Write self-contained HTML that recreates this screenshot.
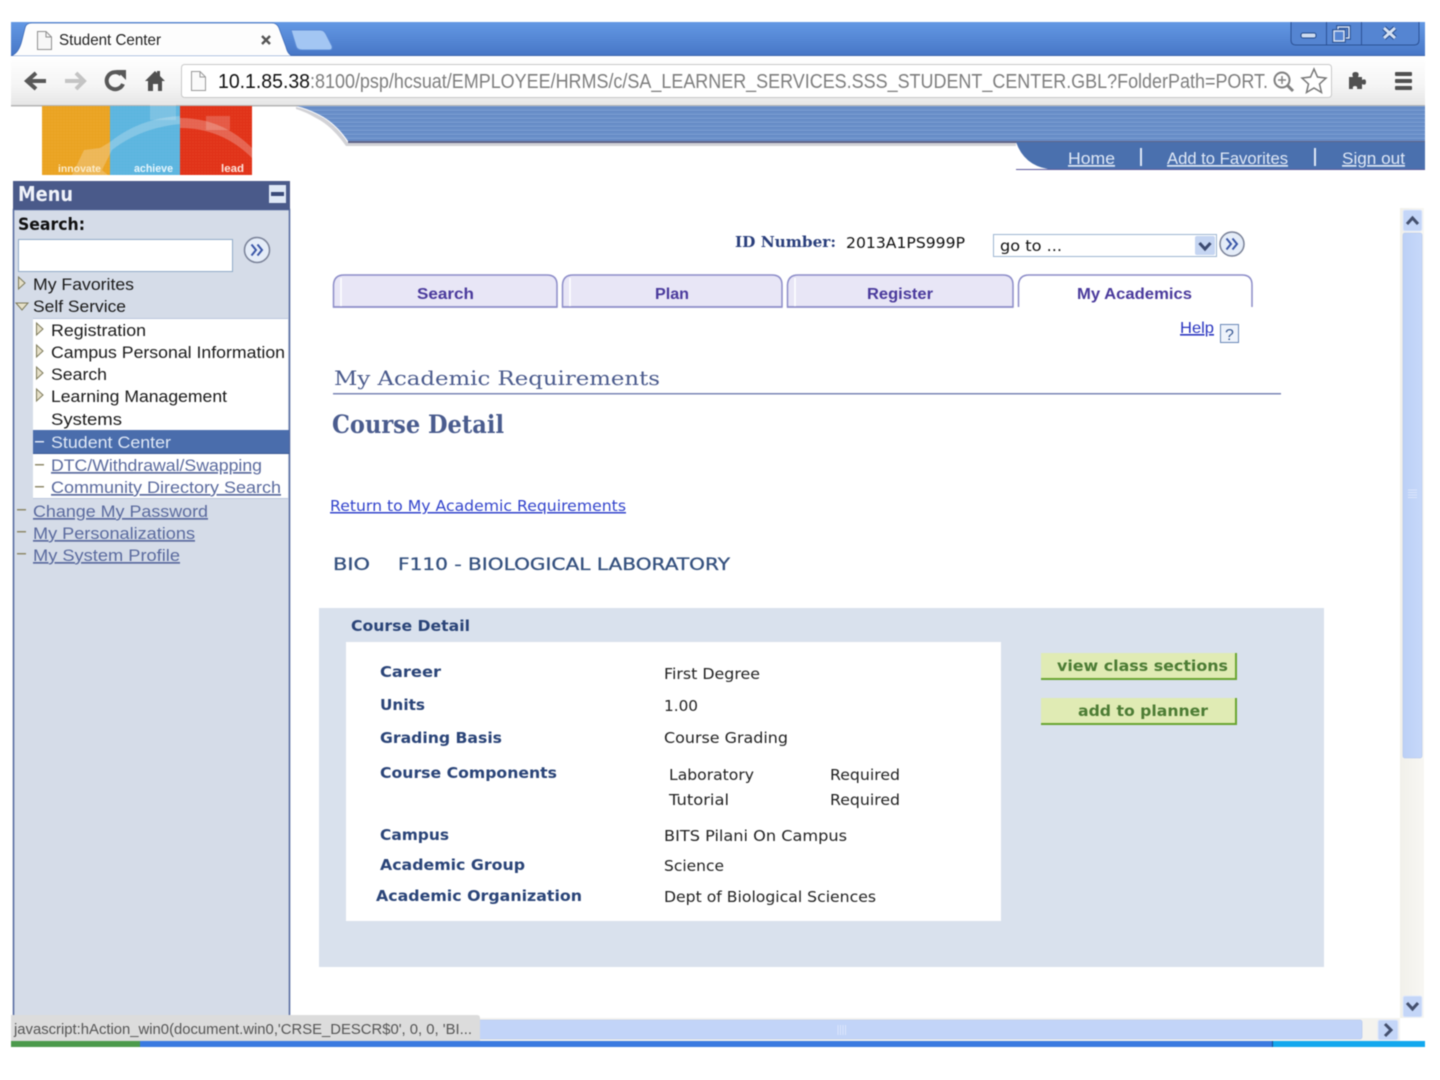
<!DOCTYPE html>
<html><head><meta charset="utf-8"><title>Student Center</title>
<style>
html,body{margin:0;padding:0;background:#fff;width:1440px;height:1080px;overflow:hidden}
svg{display:block;filter:blur(.45px)}
text{white-space:pre}
.s{font-family:"Liberation Sans",sans-serif}
.d{font-family:"DejaVu Sans",sans-serif}
.f{font-family:"DejaVu Serif","Liberation Serif",serif}
.m{font-size:17px;fill:#1a1a1a}
.l{font-size:17px;fill:#5a6a9e;text-decoration:underline}
.n{font-size:17px;fill:#dfe8f6;text-decoration:underline}
.t{font-size:16px;font-weight:bold;fill:#4a3a9c}
.b{font-family:"DejaVu Sans",sans-serif;font-size:15px;font-weight:bold;fill:#2a4478}
.v{font-family:"DejaVu Sans",sans-serif;font-size:15px;fill:#222}
.g{font-family:"DejaVu Sans",sans-serif;font-size:15px;font-weight:bold;fill:#4c7c34}
</style></head><body>
<svg width="1440" height="1080" viewBox="0 0 1440 1080" xmlns="http://www.w3.org/2000/svg">
<defs>
<linearGradient id="fr" x1="0" y1="0" x2="0" y2="1"><stop offset="0" stop-color="#6398e4"/><stop offset="1" stop-color="#4776c6"/></linearGradient>
<linearGradient id="tb" x1="0" y1="0" x2="0" y2="1"><stop offset="0" stop-color="#ffffff"/><stop offset=".6" stop-color="#f5f5f5"/><stop offset="1" stop-color="#e6e6e6"/></linearGradient>
<linearGradient id="tr" x1="0" y1="0" x2="1" y2="0"><stop offset="0" stop-color="#f1f0ea"/><stop offset="1" stop-color="#f8f7f3"/></linearGradient>
<linearGradient id="sb" x1="0" y1="0" x2="1" y2="0"><stop offset="0" stop-color="#bcd0f6"/><stop offset="1" stop-color="#c6d8fa"/></linearGradient>
<pattern id="st" width="4" height="4" patternUnits="userSpaceOnUse"><rect width="4" height="4" fill="#6b90c9"/><rect y="2" width="4" height="1" fill="#7c9ed3"/><rect y="3" width="4" height="1" fill="#5f86c2"/></pattern>
<pattern id="dots" width="3" height="3" patternUnits="userSpaceOnUse"><rect width="3" height="3" fill="#000" fill-opacity=".04"/><rect width="2" height="2" fill="#fff" fill-opacity=".04"/></pattern>
</defs>

<!-- window frame -->
<rect x="11" y="22" width="1414" height="34" fill="url(#fr)"/>
<rect x="11" y="55" width="1414" height="1" fill="#3a64ac"/>
<path d="M1291 22V40Q1291 45 1296 45H1414Q1419 45 1419 40V22" fill="#5585d2" stroke="#2c5296" stroke-width="1"/>
<path d="M1326.500 22V45M1361.500 22V45" stroke="#2c5296"/>
<rect x="1301" y="33" width="15" height="5" rx="2" fill="#cfdcf0" stroke="#234a8c"/>
<rect x="1338" y="27" width="11" height="11" fill="none" stroke="#234a8c" stroke-width="3.500"/>
<rect x="1338" y="27" width="11" height="11" fill="none" stroke="#dbe6f6" stroke-width="1.500"/>
<rect x="1334" y="31" width="10" height="10" fill="#5585d2" stroke="#234a8c" stroke-width="3.500"/>
<rect x="1334" y="31" width="10" height="10" fill="#5585d2" stroke="#dbe6f6" stroke-width="1.500"/>
<path d="M1384 28L1395 38M1395 28L1384 38" stroke="#234a8c" stroke-width="5"/>
<path d="M1384 28L1395 38M1395 28L1384 38" stroke="#d5e1f3" stroke-width="3"/>
<!-- new tab -->
<path d="M291 30H320Q324 30 326 34L332 46Q333 50 329 50H302Q297 50 296 46Z" fill="#a3c6f3" stroke="#5b8bd6"/>
<!-- active tab -->
<path d="M11 56Q19 53 22 40L25 28Q26 23 32 23H272Q277 23 279 28L286 47Q288 55 293 56Z" fill="#fdfdfd" stroke="#3e6bb8" stroke-width=".8"/>
<path d="M37.500 31.500H46L51.500 37V49.500H37.500Z" fill="#f7f7f7" stroke="#8f8f8f"/><path d="M46 31.500V37H51.500" fill="none" stroke="#8f8f8f"/>
<text class="s" x="59" y="45" font-size="16" fill="#222" textLength="102" lengthAdjust="spacingAndGlyphs">Student Center</text>
<path d="M262 36L270 44M270 36L262 44" stroke="#555" stroke-width="2.400"/>

<!-- toolbar -->
<rect x="11" y="56" width="1414" height="49" fill="url(#tb)"/>
<rect x="11" y="56" width="279" height="2" fill="#fff"/>
<rect x="11" y="105" width="1414" height="1.500" fill="#b4b4b4"/>
<path d="M46 81H30M36 73L27 81L36 89" fill="none" stroke="#585858" stroke-width="4"/>
<path d="M65 81H82M76 73L84 81L76 89" fill="none" stroke="#c4c4c4" stroke-width="4"/>
<path d="M123 84A8.500 8.500 0 1 1 121 74.500" fill="none" stroke="#585858" stroke-width="4"/><path d="M116 70H126V80Z" fill="#585858"/>
<path d="M155 71L145 81H148V91H153V84H158V91H162V81H165L160 76V71H157V73Z" fill="#505050"/>
<rect x="181.500" y="64.500" width="1150" height="33" rx="3" fill="#fff" stroke="#c8c8c8"/>
<path d="M191.500 71.500H200L205.500 77V90.500H191.500Z" fill="#fafafa" stroke="#9a9a9a"/><path d="M200 71.500V77H205.500" fill="none" stroke="#9a9a9a"/>
<text class="s" x="218" y="88" font-size="20" fill="#111" textLength="92" lengthAdjust="spacingAndGlyphs">10.1.85.38</text>
<text class="s" x="310" y="88" font-size="20" fill="#7e7e7e" textLength="958" lengthAdjust="spacingAndGlyphs">:8100/psp/hcsuat/EMPLOYEE/HRMS/c/SA_LEARNER_SERVICES.SSS_STUDENT_CENTER.GBL?FolderPath=PORT.</text>
<circle cx="1282" cy="80" r="7.500" fill="none" stroke="#808080" stroke-width="2"/><path d="M1287 85L1293 91" stroke="#808080" stroke-width="3"/><path d="M1278 80H1286M1282 76V84" stroke="#808080" stroke-width="1.500"/>
<path d="M1314 69L1317.500 77L1326 78L1319.500 84L1321.500 92.500L1314 88L1306.500 92.500L1308.500 84L1302 78L1310.500 77Z" fill="#fff" stroke="#777" stroke-width="1.500"/>
<path d="M1349 77H1353Q1351 72 1355.500 72Q1360 72 1358 77H1362V80Q1366 78 1366 82Q1366 86 1362 84V89H1357Q1358 86 1355 86Q1352 86 1353 89H1349Z" fill="#505050"/>
<rect x="1395" y="72" width="17" height="4" rx="1" fill="#505050"/><rect x="1395" y="79" width="17" height="4" rx="1" fill="#505050"/><rect x="1395" y="86" width="17" height="4" rx="1" fill="#505050"/>

<!-- logo -->
<rect x="42" y="106" width="68" height="69" fill="#f4a922"/>
<rect x="110" y="106" width="70" height="69" fill="#5fbce8"/>
<rect x="180" y="106" width="72" height="69" fill="#ea3418"/>
<path d="M72 175L84 150L100 148L110 142Q140 118 180 116V124Q140 128 112 150L102 170L108 175Z" fill="#fff" fill-opacity=".25"/>
<path d="M180 118Q222 118 252 148V158Q222 128 180 128Z" fill="#fff" fill-opacity=".25"/>
<path d="M150 104H176V120H150Z M206 116H230V130H206Z" fill="#fff" fill-opacity=".2"/>
<rect x="42" y="106" width="210" height="69" fill="url(#dots)"/>
<text class="s" x="58" y="172" font-size="10" font-weight="bold" fill="#fbeccb" textLength="43" lengthAdjust="spacingAndGlyphs">innovate</text>
<text class="s" x="134" y="172" font-size="11" font-weight="bold" fill="#e8f6fc" textLength="39" lengthAdjust="spacingAndGlyphs">achieve</text>
<text class="s" x="221" y="172" font-size="11" font-weight="bold" fill="#fde4dc" textLength="23" lengthAdjust="spacingAndGlyphs">lead</text>

<!-- header band -->
<path d="M296 107Q306 109 318 115Q335 123 348 143H1016V146H346Q332 126 316 118Q306 112 296 109Z" fill="#d2d2d6"/>
<path d="M296 106H1425V141H348Q335 122 318 114Q306 108 296 106Z" fill="url(#st)"/>
<path d="M348 142H1425" stroke="#5f6488" stroke-width="2"/>
<path d="M1016 142H1425V169H1048Q1024 165 1016 142Z" fill="#4a70ae"/>
<rect x="1016" y="169" width="409" height="1" fill="#5d5a9c"/>
<text class="s n" x="1068" y="164" textLength="47" lengthAdjust="spacingAndGlyphs">Home</text>
<rect x="1140" y="148" width="2" height="18" fill="#dfe8f6"/>
<text class="s n" x="1167" y="164" textLength="121" lengthAdjust="spacingAndGlyphs">Add to Favorites</text>
<rect x="1314" y="148" width="2" height="18" fill="#dfe8f6"/>
<text class="s n" x="1342" y="164" textLength="63" lengthAdjust="spacingAndGlyphs">Sign out</text>

<!-- menu -->
<rect x="13.500" y="209.500" width="276" height="815" fill="#d5dce8" stroke="#4f659c" stroke-width="1.500"/>
<rect x="13" y="181" width="277" height="28.500" fill="#4a5a8a"/>
<text class="d" x="18" y="201" font-size="20" font-weight="bold" fill="#f0f3fa" textLength="55" lengthAdjust="spacingAndGlyphs">Menu</text>
<rect x="269" y="185" width="17" height="18" fill="#dfe8f6"/><rect x="271" y="192" width="13" height="4" fill="#3a4a78"/>
<text class="d" x="18" y="230" font-size="17" font-weight="bold" fill="#111" textLength="67" lengthAdjust="spacingAndGlyphs">Search:</text>
<rect x="18.500" y="239.500" width="214" height="32" fill="#fff" stroke="#90abc8"/>
<circle cx="257" cy="250" r="12.500" fill="#e4ecf8" stroke="#7a8298" stroke-width="1.500"/>
<path d="M251.500 244.500L256 250L251.500 255.500M257.500 244.500L262 250L257.500 255.500" fill="none" stroke="#3a57a8" stroke-width="2"/>
<path d="M18.500 277V289L25 283Z" fill="#e6e0c8" stroke="#7d7a5a"/>
<text class="s m" x="33" y="290" textLength="101" lengthAdjust="spacingAndGlyphs">My Favorites</text>
<path d="M16 303H28L22 310Z" fill="#e6e0c8" stroke="#7d7a5a"/>
<text class="s m" x="33" y="312" textLength="93" lengthAdjust="spacingAndGlyphs">Self Service</text>
<rect x="33" y="318" width="255" height="180" fill="#fff"/>
<rect x="33" y="318" width="255" height="1" fill="#b9c6dc"/><rect x="33" y="498" width="255" height="1" fill="#b9c6dc"/>
<g fill="#e6e0c8" stroke="#7d7a5a"><path d="M36.500 323V335L43 329Z"/><path d="M36.500 345V357L43 351Z"/><path d="M36.500 367V379L43 373Z"/><path d="M36.500 389V401L43 395Z"/></g>
<text class="s m" x="51" y="336" textLength="95" lengthAdjust="spacingAndGlyphs">Registration</text>
<text class="s m" x="51" y="358" textLength="234" lengthAdjust="spacingAndGlyphs">Campus Personal Information</text>
<text class="s m" x="51" y="380" textLength="56" lengthAdjust="spacingAndGlyphs">Search</text>
<text class="s m" x="51" y="402" textLength="176" lengthAdjust="spacingAndGlyphs">Learning Management</text>
<text class="s m" x="51" y="425" textLength="71" lengthAdjust="spacingAndGlyphs">Systems</text>
<rect x="33" y="430" width="256" height="24" fill="#4a6dac"/><rect x="33" y="453" width="256" height="1" fill="#3a5a94"/>
<rect x="35" y="441" width="9" height="1.500" fill="#dfe8f6"/>
<text class="s" x="51" y="448" font-size="17" fill="#dfe8f6" textLength="120" lengthAdjust="spacingAndGlyphs">Student Center</text>
<g fill="#8f8a6a"><rect x="35" y="464" width="9" height="1.500"/><rect x="35" y="486" width="9" height="1.500"/><rect x="17" y="509" width="9" height="1.500"/><rect x="17" y="531" width="9" height="1.500"/><rect x="17" y="553" width="9" height="1.500"/></g>
<text class="s l" x="51" y="471" textLength="211" lengthAdjust="spacingAndGlyphs">DTC/Withdrawal/Swapping</text>
<text class="s l" x="51" y="493" textLength="230" lengthAdjust="spacingAndGlyphs">Community Directory Search</text>
<text class="s l" x="33" y="517" textLength="175" lengthAdjust="spacingAndGlyphs">Change My Password</text>
<text class="s l" x="33" y="539" textLength="162" lengthAdjust="spacingAndGlyphs">My Personalizations</text>
<text class="s l" x="33" y="561" textLength="147" lengthAdjust="spacingAndGlyphs">My System Profile</text>

<!-- ID row -->
<text class="f" x="735" y="247" font-size="15" font-weight="bold" fill="#2a3f7c" textLength="101" lengthAdjust="spacingAndGlyphs">ID Number:</text>
<text class="d" x="846" y="248" font-size="15" fill="#111" textLength="119" lengthAdjust="spacingAndGlyphs">2013A1PS999P</text>
<rect x="993.500" y="234.500" width="223" height="22" fill="#fff" stroke="#9db6d2"/>
<text class="d" x="1000" y="251" font-size="15" fill="#111" textLength="62" lengthAdjust="spacingAndGlyphs">go to ...</text>
<rect x="1195" y="236" width="20" height="19" rx="2" fill="#c5d5f2"/>
<path d="M1199.500 243L1205 249L1210.500 243" fill="none" stroke="#3c4a70" stroke-width="3"/>
<circle cx="1232" cy="244" r="12" fill="#e4ecf8" stroke="#7a8298" stroke-width="1.500"/>
<path d="M1226.500 238.500L1231 244L1226.500 249.500M1232.500 238.500L1237 244L1232.500 249.500" fill="none" stroke="#3a57a8" stroke-width="2"/>

<!-- tabs -->
<g stroke="#8c8cc8" stroke-width="1.500" fill="#e8e6f6">
<path d="M333.500 307V285Q334 275 344 275H547Q557 275 557 285V307Z"/>
<path d="M562.500 307V285Q563 275 573 275H772Q782 275 782 285V307Z"/>
<path d="M787.500 307V285Q788 275 798 275H1003Q1013 275 1013 285V307Z"/>
</g>
<g stroke="#fff" stroke-width="1.500"><path d="M341 278V307M570 278V307M795 278V307"/></g>
<path d="M1018.500 307V285Q1019 275 1029 275H1242Q1252 275 1252 285V307" fill="#fff" stroke="#8c8cc8" stroke-width="1.500"/>
<path d="M333 307H557M562 307H782M787 307H1013" stroke="#8c8cc8" stroke-width="1.500"/>
<text class="s t" x="417" y="299" textLength="57" lengthAdjust="spacingAndGlyphs">Search</text>
<text class="s t" x="655" y="299" textLength="34" lengthAdjust="spacingAndGlyphs">Plan</text>
<text class="s t" x="867" y="299" textLength="66" lengthAdjust="spacingAndGlyphs">Register</text>
<text class="s t" x="1077" y="299" textLength="115" lengthAdjust="spacingAndGlyphs">My Academics</text>
<text class="s" x="1180" y="333" font-size="16" fill="#2a35c0" text-decoration="underline" textLength="34" lengthAdjust="spacingAndGlyphs">Help</text>
<rect x="1220.500" y="324.500" width="18" height="18" fill="#eef3fb" stroke="#6a88b8"/>
<text class="s" x="1225" y="340" font-size="16" fill="#3a5a94">?</text>

<!-- headings -->
<text class="f" x="334" y="385" font-size="20" fill="#4a5a8c" textLength="326" lengthAdjust="spacingAndGlyphs">My Academic Requirements</text>
<rect x="333" y="393" width="948" height="1.500" fill="#7a85b5"/>
<text class="f" x="332" y="433" font-size="25" font-weight="bold" fill="#4a5c8e" textLength="172" lengthAdjust="spacingAndGlyphs">Course Detail</text>
<text class="d" x="330" y="511" font-size="15" fill="#3344cc" text-decoration="underline" textLength="296" lengthAdjust="spacingAndGlyphs">Return to My Academic Requirements</text>
<text class="d" x="333" y="570" font-size="17" font-weight="500" fill="#34507e" stroke="#34507e" stroke-width=".3" textLength="37" lengthAdjust="spacingAndGlyphs">BIO</text>
<text class="d" x="398" y="570" font-size="17" font-weight="500" fill="#34507e" stroke="#34507e" stroke-width=".3" textLength="332" lengthAdjust="spacingAndGlyphs">F110 - BIOLOGICAL LABORATORY</text>

<!-- panel -->
<rect x="319" y="608" width="1005" height="359" fill="#d9e1ed"/>
<text class="b" x="351" y="631" fill="#1f3a6e" textLength="119" lengthAdjust="spacingAndGlyphs">Course Detail</text>
<rect x="346" y="642" width="655" height="279" fill="#fff"/>
<text class="b" x="380" y="677" textLength="61" lengthAdjust="spacingAndGlyphs">Career</text>
<text class="b" x="380" y="710" textLength="45" lengthAdjust="spacingAndGlyphs">Units</text>
<text class="b" x="380" y="743" textLength="122" lengthAdjust="spacingAndGlyphs">Grading Basis</text>
<text class="b" x="380" y="778" textLength="177" lengthAdjust="spacingAndGlyphs">Course Components</text>
<text class="b" x="380" y="840" textLength="69" lengthAdjust="spacingAndGlyphs">Campus</text>
<text class="b" x="380" y="870" textLength="145" lengthAdjust="spacingAndGlyphs">Academic Group</text>
<text class="b" x="376" y="901" textLength="206" lengthAdjust="spacingAndGlyphs">Academic Organization</text>
<text class="v" x="664" y="679" textLength="96" lengthAdjust="spacingAndGlyphs">First Degree</text>
<text class="v" x="664" y="711" textLength="34" lengthAdjust="spacingAndGlyphs">1.00</text>
<text class="v" x="664" y="743" textLength="124" lengthAdjust="spacingAndGlyphs">Course Grading</text>
<text class="v" x="669" y="780" textLength="85" lengthAdjust="spacingAndGlyphs">Laboratory</text>
<text class="v" x="830" y="780" textLength="70" lengthAdjust="spacingAndGlyphs">Required</text>
<text class="v" x="669" y="805" textLength="60" lengthAdjust="spacingAndGlyphs">Tutorial</text>
<text class="v" x="830" y="805" textLength="70" lengthAdjust="spacingAndGlyphs">Required</text>
<text class="v" x="664" y="841" textLength="183" lengthAdjust="spacingAndGlyphs">BITS Pilani On Campus</text>
<text class="v" x="664" y="871" textLength="60" lengthAdjust="spacingAndGlyphs">Science</text>
<text class="v" x="664" y="902" textLength="212" lengthAdjust="spacingAndGlyphs">Dept of Biological Sciences</text>

<!-- buttons -->
<rect x="1041" y="653" width="196" height="27" fill="#e0ebb4"/>
<rect x="1235" y="653" width="2" height="27" fill="#6aa530"/><rect x="1041" y="678" width="196" height="2" fill="#6aa530"/>
<text class="g" x="1057" y="671" textLength="171" lengthAdjust="spacingAndGlyphs">view class sections</text>
<rect x="1041" y="698" width="196" height="27" fill="#e0ebb4"/>
<rect x="1235" y="698" width="2" height="27" fill="#6aa530"/><rect x="1041" y="723" width="196" height="2" fill="#6aa530"/>
<text class="g" x="1078" y="716" textLength="130" lengthAdjust="spacingAndGlyphs">add to planner</text>

<!-- vertical scrollbar -->
<rect x="1400" y="208" width="24" height="810" fill="url(#tr)"/>
<rect x="1403" y="210" width="19" height="21" rx="2" fill="#c4d6f8" stroke="#e0e8fa"/>
<path d="M1407 224L1412.500 218L1418 224" fill="none" stroke="#44506e" stroke-width="3"/>
<rect x="1403" y="233" width="19" height="525" rx="2" fill="url(#sb)" stroke="#b0c4ec" stroke-width=".6"/>
<path d="M1408 490H1417M1408 492.500H1417M1408 495H1417M1408 497.500H1417" stroke="#dbe5fb"/>
<rect x="1403" y="996" width="19" height="21" rx="2" fill="#c4d6f8" stroke="#e0e8fa"/>
<path d="M1407 1003L1412.500 1009L1418 1003" fill="none" stroke="#44506e" stroke-width="3"/>

<!-- horizontal scrollbar -->
<rect x="290" y="1018" width="1110" height="23" fill="#f4f3ee"/>
<rect x="470" y="1020" width="892" height="19" rx="2" fill="#c2d4f8" stroke="#b0c4ec" stroke-width=".6"/>
<path d="M838 1025V1035M840.500 1025V1035M843 1025V1035M845.500 1025V1035" stroke="#dbe5fb"/>
<rect x="1378" y="1020" width="20" height="20" rx="2" fill="#c4d6f8" stroke="#e0e8fa"/>
<path d="M1385 1024L1391 1030L1385 1036" fill="none" stroke="#44506e" stroke-width="3"/>

<!-- taskbar -->
<rect x="140" y="1041" width="1132" height="6" fill="#3a7ae0"/>
<rect x="11" y="1041" width="129" height="6" fill="#4c9a4c"/>
<rect x="1272" y="1041" width="1" height="6" fill="#1a4a90"/>
<rect x="1273" y="1041" width="152" height="6" fill="#13a8ee"/>

<!-- status bubble -->
<path d="M11 1041V1015H477Q480 1015 480 1018V1041Z" fill="#dcdcdc"/>
<text class="s" x="14" y="1034" font-size="15" fill="#555" textLength="458" lengthAdjust="spacingAndGlyphs">javascript:hAction_win0(document.win0,'CRSE_DESCR$0', 0, 0, 'BI...</text>
</svg>
</body></html>
